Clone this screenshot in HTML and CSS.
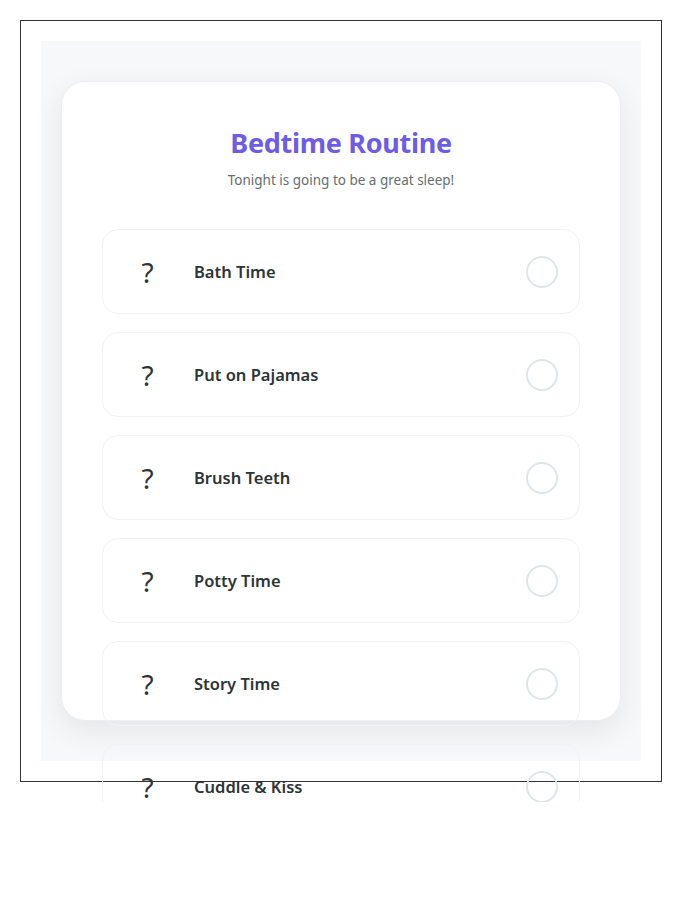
FILE: index.html
```html
<!DOCTYPE html>
<html lang="en">
<head>
    <meta charset="UTF-8">
    <meta name="viewport" content="width=device-width, initial-scale=1.0">
    <title>Bedtime Routine</title>
    <link rel="stylesheet" href="styles.css">
</head>
<body>
    <div class="page">
        <div class="frame">
            <div class="stage">
                <div class="card">
                    <h1>Bedtime Routine</h1>
                    <p class="subtitle">Tonight is going to be a great sleep!</p>

                    <div class="tasks">
                        <div class="task">
                            <span class="task-icon">?</span>
                            <span class="task-name">Bath Time</span>
                            <span class="check"></span>
                        </div>
                        <div class="task">
                            <span class="task-icon">?</span>
                            <span class="task-name">Put on Pajamas</span>
                            <span class="check"></span>
                        </div>
                        <div class="task">
                            <span class="task-icon">?</span>
                            <span class="task-name">Brush Teeth</span>
                            <span class="check"></span>
                        </div>
                        <div class="task">
                            <span class="task-icon">?</span>
                            <span class="task-name">Potty Time</span>
                            <span class="check"></span>
                        </div>
                        <div class="task">
                            <span class="task-icon">?</span>
                            <span class="task-name">Story Time</span>
                            <span class="check"></span>
                        </div>
                        <div class="task">
                            <span class="task-icon">?</span>
                            <span class="task-name">Cuddle &amp; Kiss</span>
                            <span class="check"></span>
                        </div>
                    </div>
                </div>
            </div>
        </div>
    </div>
</body>
</html>
```

FILE: styles.css
```css
html, body {
    margin: 0;
    padding: 0;
    background: #fff;
}
body {
    font-family: "Noto Sans", "Open Sans", sans-serif;
}
.page {
    height: 802px;
    padding: 20px;
    box-sizing: border-box;
    overflow: hidden;
}
.frame {
    width: 642px;
    height: 762px;
    box-sizing: border-box;
    border: 1px solid #333;
    padding: 20px;
}
.stage {
    height: 720px;
    background-color: #f7f8fa;
    display: flex;
    align-items: center;
    justify-content: center;
}
.card {
    width: 560px;
    height: 640px;
    box-sizing: border-box;
    background-color: #fff;
    border: 1px solid #eceef1;
    border-radius: 24px;
    box-shadow: 0 10px 30px rgba(0, 0, 0, 0.08);
    padding: 40px;
}
h1 {
    margin: 0;
    padding-top: 3px;
    text-align: center;
    color: #6c5ce7;
    font-size: 27px;
    font-weight: 700;
    letter-spacing: -0.3px;
    line-height: 36px;
}
.subtitle {
    margin: 9px 0 0;
    text-align: center;
    color: #636e72;
    font-size: 13.5px;
    line-height: 20px;
}
.tasks {
    margin-top: 39px;
    display: flex;
    flex-direction: column;
    gap: 18px;
}
.task {
    height: 85px;
    flex-shrink: 0;
    box-sizing: border-box;
    display: flex;
    align-items: center;
    padding: 0 20px;
    border: 1px solid #f1f2f5;
    border-radius: 16px;
}
.task-icon {
    width: 49px;
    text-align: center;
    font-size: 28px;
    color: #2d3436;
    line-height: 1;
}
.task-name {
    flex: 1;
    margin-left: 22px;
    font-size: 16.5px;
    font-weight: 600;
    color: #2d3436;
}
.check {
    width: 32px;
    height: 32px;
    box-sizing: border-box;
    border: 2px solid #dfe6e9;
    border-radius: 50%;
    margin-right: 1px;
}
```
